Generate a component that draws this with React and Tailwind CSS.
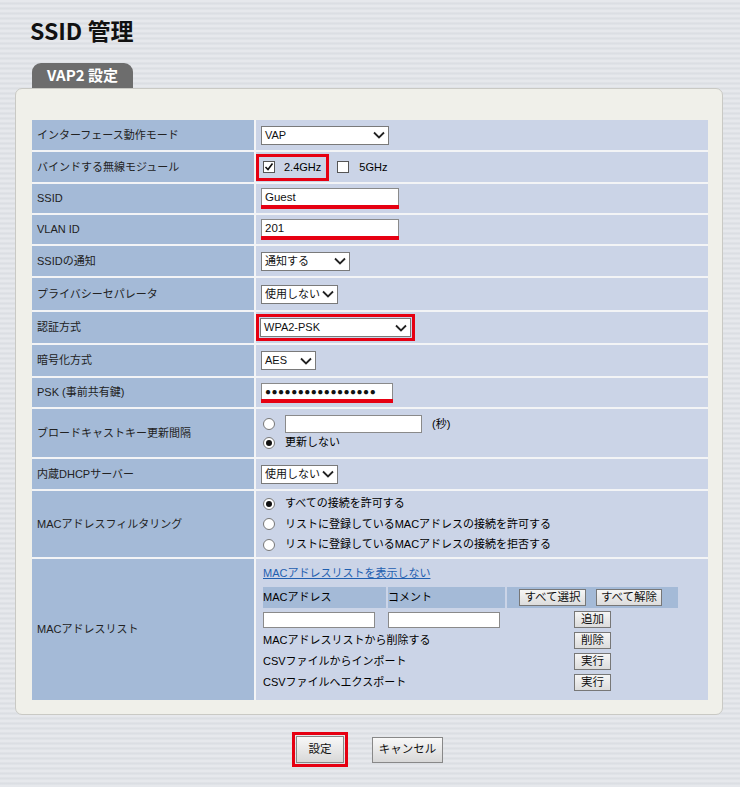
import React from "react";

const font = "font-['Liberation_Sans','Noto_Sans_CJK_JP',sans-serif]";

const Chevron = () => (
  <svg width="12" height="8" viewBox="0 0 12 8" className="shrink-0">
    <path d="M1 1.5 L6 6.5 L11 1.5" fill="none" stroke="#222" strokeWidth="1.8" />
  </svg>
);

const Select = ({ value, w }) => (
  <div
    className={`flex items-center justify-between h-[19px] bg-white border border-[#7a7a7a] pl-[3px] pr-[3px] text-[11px] text-[#111] whitespace-nowrap ${w}`}
  >
    <span>{value}</span>
    <Chevron />
  </div>
);

const TextBox = ({ value, w, mark }) => (
  <div className={`flex flex-col ${w}`}>
    <div className="h-[18px] bg-white border border-[#8a8a8a] px-[3px] text-[11.5px] leading-[16px] text-[#111]">
      {value}
    </div>
    {mark && <div className="h-[4px] bg-[#e60012] -mt-[1px]" />}
  </div>
);

const Check = ({ checked }) => (
  <div className="w-[12px] h-[12px] bg-white border border-[#555] flex items-center justify-center">
    {checked && (
      <svg width="10" height="10" viewBox="0 0 10 10">
        <path d="M1.5 5 L4 7.5 L8.5 1.5" fill="none" stroke="#111" strokeWidth="1.6" />
      </svg>
    )}
  </div>
);

const Radio = ({ checked }) => (
  <div className="w-[12px] h-[12px] rounded-full bg-white border border-[#777] flex items-center justify-center shrink-0">
    {checked && <div className="w-[6px] h-[6px] rounded-full bg-[#111]" />}
  </div>
);

const Btn = ({ children, cls = "" }) => (
  <div
    className={`flex items-center justify-center h-[17px] border border-[#777] bg-gradient-to-b from-[#f6f6f6] to-[#dcdcdc] text-[11.5px] text-[#111] whitespace-nowrap ${cls}`}
  >
    {children}
  </div>
);

const Row = ({ label, h, children, cls = "" }) => (
  <div className="flex gap-[2px]" style={{ height: h }}>
    <div className="w-[222px] shrink-0 bg-[#a4bad7] flex items-center pl-[5px] text-[11px] text-[#222]">
      {label}
    </div>
    <div className={`flex-1 bg-[#cbd4e7] pl-[5px] ${cls}`}>{children}</div>
  </div>
);

export default function App() {
  return (
    <div
      className={`${font} w-[740px] h-[787px] relative overflow-hidden bg-[#e1e4e8] bg-[repeating-linear-gradient(180deg,#e6e8ec_0px,#e6e8ec_2px,#d9dce1_3px,#e2e5e9_5px)]`}
    >
      <h1 className="pl-[30px] pt-[15px] text-[23px] font-bold text-[#111] leading-[30px] font-['Noto_Sans_CJK_JP',sans-serif]">
        SSID 管理
      </h1>

      <div className="ml-[32px] mt-[18px] w-[101px] h-[25px] rounded-t-[9px] bg-[#6d6d6d] flex items-center justify-center text-white text-[15px] font-bold font-['Noto_Sans_CJK_JP',sans-serif]">
        VAP2 設定
      </div>

      <div className="ml-[15px] w-[708px] rounded-[7px] bg-[#f0f0ea] border border-[#c9c9c4] pt-[31px] pl-[16px] pr-[14px] pb-[14px]">
        <div className="flex flex-col gap-[2px] bg-[#f3f4f6]">
          <Row label="インターフェース動作モード" h={30} cls="flex items-center">
            <Select value="VAP" w="w-[128px]" />
          </Row>

          <Row label="バインドする無線モジュール" h={30} cls="flex items-center !pl-0">
            <div className="flex items-center h-[27px] border-[3px] border-[#e60012] pl-[4px] pr-[5px] gap-[9px] text-[11px]">
              <Check checked />
              <span>2.4GHz</span>
            </div>
            <div className="flex items-center ml-[8px] gap-[10px] text-[11px]">
              <Check />
              <span>5GHz</span>
            </div>
          </Row>

          <Row label="SSID" h={29} cls="flex items-center">
            <TextBox value="Guest" w="w-[138px]" mark />
          </Row>

          <Row label="VLAN ID" h={29} cls="flex items-center">
            <TextBox value="201" w="w-[138px]" mark />
          </Row>

          <Row label="SSIDの通知" h={30} cls="flex items-center">
            <Select value="通知する" w="w-[89px]" />
          </Row>

          <Row label="プライバシーセパレータ" h={32} cls="flex items-center">
            <Select value="使用しない" w="w-[77px]" />
          </Row>

          <Row label="認証方式" h={31} cls="flex items-center !pl-0">
            <div className="border-[3px] border-[#e60012] p-[1px]">
              <Select value="WPA2-PSK" w="w-[151px]" />
            </div>
          </Row>

          <Row label="暗号化方式" h={31} cls="flex items-center">
            <Select value="AES" w="w-[55px]" />
          </Row>

          <Row label="PSK (事前共有鍵)" h={29} cls="flex items-center">
            <div className="flex flex-col w-[132px]">
              <div className="h-[17px] bg-white border border-[#8a8a8a] px-[3px] text-[10px] leading-[15px] tracking-[0.5px] text-[#111] whitespace-nowrap overflow-hidden">
                ●●●●●●●●●●●●●●●●●
              </div>
              <div className="h-[4px] bg-[#e60012] -mt-[1px]" />
            </div>
          </Row>

          <Row label="ブロードキャストキー更新間隔" h={48} cls="flex flex-col justify-center gap-[1px] !pl-[7px]">
            <div className="flex items-center text-[11px]">
              <Radio />
              <div className="ml-[10px] w-[137px] h-[18px] bg-white border border-[#8a8a8a]" />
              <span className="ml-[10px]">(秒)</span>
            </div>
            <div className="flex items-center gap-[10px] text-[11px]">
              <Radio checked />
              <span>更新しない</span>
            </div>
          </Row>

          <Row label="内蔵DHCPサーバー" h={30} cls="flex items-center">
            <Select value="使用しない" w="w-[77px]" />
          </Row>

          <Row label="MACアドレスフィルタリング" h={66} cls="flex flex-col justify-center gap-[4px] !pl-[7px]">
            <div className="flex items-center gap-[10px] text-[11px]">
              <Radio checked />
              <span>すべての接続を許可する</span>
            </div>
            <div className="flex items-center gap-[10px] text-[11px]">
              <Radio />
              <span>リストに登録しているMACアドレスの接続を許可する</span>
            </div>
            <div className="flex items-center gap-[10px] text-[11px]">
              <Radio />
              <span>リストに登録しているMACアドレスの接続を拒否する</span>
            </div>
          </Row>

          <Row label="MACアドレスリスト" h={141} cls="!pl-[7px] pt-[6px] text-[11px]">
            <div className="text-[#1f5fb0] underline leading-[16px]">MACアドレスリストを表示しない</div>
            <div className="mt-[6px] w-[415px] flex gap-[2px] h-[21px]">
              <div className="w-[123px] bg-[#a4bad7] flex items-center">MACアドレス</div>
              <div className="w-[117px] bg-[#a4bad7] flex items-center">コメント</div>
              <div className="flex-1 bg-[#a4bad7] flex items-center pl-[12px] gap-[10px]">
                <Btn cls="w-[67px]">すべて選択</Btn>
                <Btn cls="w-[66px]">すべて解除</Btn>
              </div>
            </div>
            <div className="mt-[3px] flex items-center h-[17px]">
              <div className="w-[112px] h-[16px] bg-white border border-[#8a8a8a]" />
              <div className="ml-[13px] w-[112px] h-[16px] bg-white border border-[#8a8a8a]" />
              <Btn cls="ml-[74px] w-[37px]">追加</Btn>
            </div>
            <div className="mt-[4px] flex items-center h-[17px]">
              <span className="w-[311px]">MACアドレスリストから削除する</span>
              <Btn cls="w-[37px]">削除</Btn>
            </div>
            <div className="mt-[4px] flex items-center h-[17px]">
              <span className="w-[311px]">CSVファイルからインポート</span>
              <Btn cls="w-[37px]">実行</Btn>
            </div>
            <div className="mt-[4px] flex items-center h-[17px]">
              <span className="w-[311px]">CSVファイルへエクスポート</span>
              <Btn cls="w-[37px]">実行</Btn>
            </div>
          </Row>
        </div>
      </div>

      <div className="flex items-center mt-[17px] pl-[292px]">
        <div className="border-[3px] border-[#e60012] p-[1px]">
          <div className="w-[48px] h-[27px] flex items-center justify-center border border-[#888] bg-gradient-to-b from-[#f8f8f8] to-[#d8d8d8] text-[11.5px] text-[#111]">
            設定
          </div>
        </div>
        <div className="ml-[24px] w-[71px] h-[26px] flex items-center justify-center border border-[#888] bg-gradient-to-b from-[#f8f8f8] to-[#d8d8d8] text-[11.5px] text-[#111]">
          キャンセル
        </div>
      </div>
    </div>
  );
}
